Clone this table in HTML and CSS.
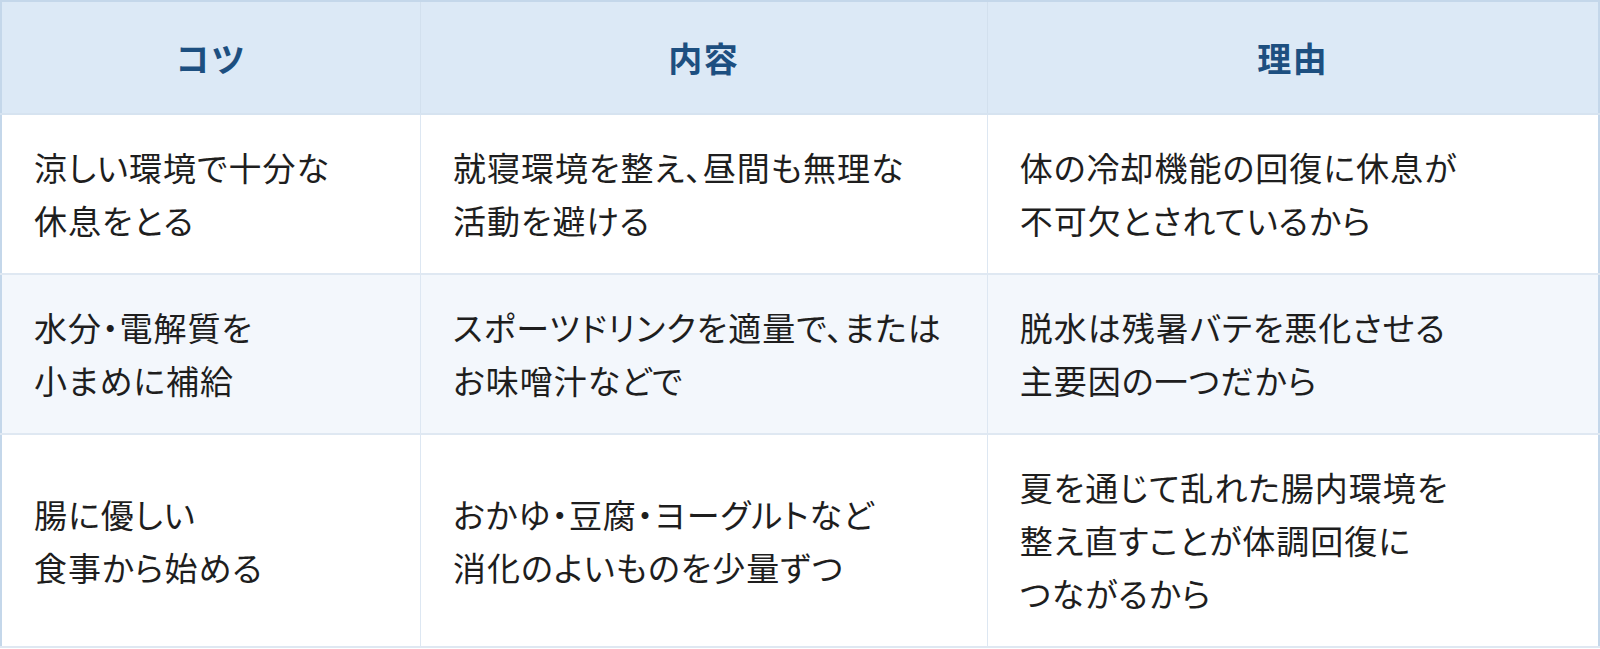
FILE: index.html
```html
<!DOCTYPE html>
<html lang="ja">
<head>
<meta charset="utf-8">
<link rel="stylesheet" href="styles.css">
</head>
<body>
<table class="tips">
  <colgroup>
    <col class="c1">
    <col class="c2">
    <col class="c3">
  </colgroup>
  <thead>
    <tr>
      <th>コツ</th>
      <th>内容</th>
      <th>理由</th>
    </tr>
  </thead>
  <tbody>
    <tr>
      <td>涼しい環境で十分な<br>休息をとる</td>
      <td>就寝環境を整え、昼間も無理な<br>活動を避ける</td>
      <td>体の冷却機能の回復に休息が<br>不可欠とされているから</td>
    </tr>
    <tr class="alt">
      <td>水分・電解質を<br>小まめに補給</td>
      <td>スポーツドリンクを適量で、または<br>お味噌汁などで</td>
      <td>脱水は残暑バテを悪化させる<br>主要因の一つだから</td>
    </tr>
    <tr>
      <td>腸に優しい<br>食事から始める</td>
      <td>おかゆ・豆腐・ヨーグルトなど<br>消化のよいものを少量ずつ</td>
      <td>夏を通じて乱れた腸内環境を<br>整え直すことが体調回復に<br>つながるから</td>
    </tr>
  </tbody>
</table>
</body>
</html>
```
FILE: styles.css
```css
html, body {
  margin: 0;
  padding: 0;
  background: #ffffff;
}
body {
  font-family: "Noto Sans CJK JP", "Noto Sans", sans-serif;
  color: #1e1e1e;
}
.tips {
  width: 1600px;
  border-collapse: collapse;
  table-layout: fixed;
  border: 2px solid #c4d7ea;
}
.c1 { width: 419px; }
.c2 { width: 566px; }
.c3 { width: 611px; }
.tips th {
  background: #dce9f6;
  color: #1d4f80;
  font-size: 34px;
  font-weight: 700;
  height: 111px;
  padding: 0;
  text-align: center;
  vertical-align: middle;
  border-left: 1px solid #d2e0ee;
  border-bottom: 2px solid #d6e3f0;
  letter-spacing: 0.05em;
}
.tips td {
  font-size: 33px;
  line-height: 53px;
  padding: 26px 32px;
  vertical-align: middle;
  text-align: left;
  border-left: 1px solid #dde7f2;
  border-bottom: 2px solid #dfe8f2;
  font-feature-settings: "palt";
  letter-spacing: 0.03em;
}
.tips tr.alt td {
  background: #f3f7fc;
}
```
